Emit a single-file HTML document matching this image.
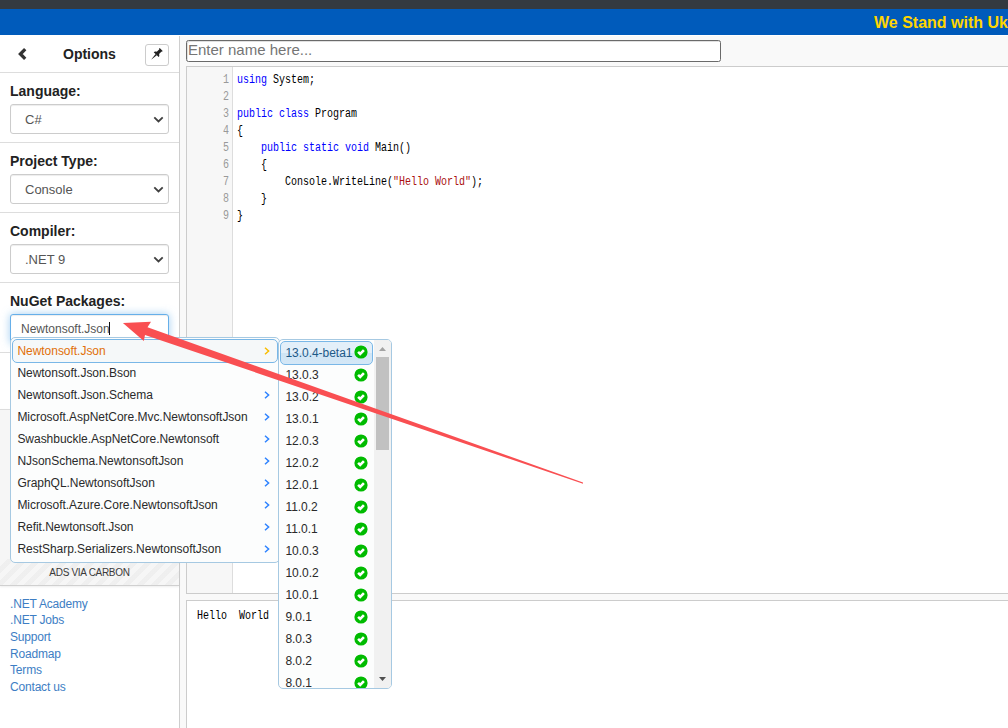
<!DOCTYPE html>
<html lang="en">
<head>
<meta charset="utf-8">
<title>C# Online Compiler | .NET Fiddle</title>
<style>
*{box-sizing:border-box;margin:0;padding:0}
html,body{width:1008px;height:728px;overflow:hidden}
body{position:relative;background:#fff;font-family:"Liberation Sans",Arial,sans-serif;font-size:14px;color:#222}
.abs{position:absolute}
#topdark{left:0;top:0;width:1008px;height:9px;background:#343a40}
#topblue{left:0;top:9px;width:1008px;height:26px;background:#005bbb;overflow:hidden}
#topblue span{position:absolute;left:874px;top:4px;font-weight:bold;font-size:16px;line-height:20px;color:#ffd500;white-space:nowrap}
#mainbg{left:180px;top:36px;width:828px;height:692px;background:#f9f9f9}
/* sidebar */
#sidebar{left:0;top:35px;width:180px;height:693px;background:linear-gradient(#fff,#fff) 0 0/180px 1px no-repeat,linear-gradient(#cecece,#cecece) 179px 0/1px 100% no-repeat,#fff}
.hdr{left:0;top:0;width:179px;height:38px;border-bottom:1px solid #ddd}
.hdr .title{position:absolute;left:63px;top:10px;font-weight:bold;font-size:14px;line-height:18px;color:#222}
.pin{left:145px;top:9px;width:24px;height:22px;border:1px solid #ccc;border-radius:3px;background:#fff}
.sec{left:0;width:179px;height:70px;border-bottom:1px solid #ddd}
.sec label{position:absolute;left:10px;top:9px;font-weight:bold;font-size:14px;line-height:18px;color:#222;white-space:nowrap}
.sel{position:absolute;left:10px;top:31px;width:159px;height:30px;border:1px solid #ccc;border-radius:3px;background:#fff;box-shadow:inset 0 1px 1px rgba(0,0,0,.075);font-size:13px;line-height:28px;color:#555;padding:1px 0 0 14px;white-space:nowrap}
.sel svg{position:absolute;right:3.7px;top:10.5px}
.sel.focus{border-color:#66afe9;box-shadow:inset 0 1px 1px rgba(0,0,0,.075),0 0 8px rgba(102,175,233,.6);font-size:12px;padding:0 0 0 10px}
.caret{display:inline-block;width:1px;height:13px;background:#111;vertical-align:-2px;margin-left:-1px}
#ads{left:0;top:374px;width:179px;height:177px;background:#f6f6f6;border-top:1px solid #ddd;border-bottom:1px solid #d0d0d0;box-shadow:0 1px 2px rgba(0,0,0,.07)}
#ads .via{position:absolute;left:0;bottom:0;width:179px;height:26px;background:repeating-linear-gradient(-45deg,transparent,transparent 5px,rgba(0,0,0,.028) 5px,rgba(0,0,0,.028) 10px);text-align:center;font-size:10px;line-height:27px;letter-spacing:-.3px;color:#3a3a3a;text-transform:uppercase}
#links{left:10px;top:561px;width:160px;height:100px;font-size:12px;line-height:17px;letter-spacing:-.18px}
#links a{position:absolute;left:0;display:block;color:#3d7ec4;text-decoration:none;white-space:nowrap}
/* main */
#name{left:186px;top:40px;width:535px;height:22px;border:1px solid #6a6a6a;border-radius:2.5px;background:#fff;font-size:15px;line-height:17px;color:#757575;padding:0 0 0 1px;box-shadow:inset 1px 1px 0 rgba(0,0,0,.12)}
#editor{left:186px;top:66px;width:830px;height:528px;border:1px solid #ccc;background:#fff}
#gutter{left:0;top:0;width:46px;height:526px;background:#f7f7f7;border-right:1px solid #ddd}
.code{font-family:"Liberation Mono","DejaVu Sans Mono",monospace;font-size:12px;line-height:17px;white-space:pre;color:#000;transform:scaleX(.8333);transform-origin:0 0}
#lnums{left:0;top:5px;width:42px;text-align:right;color:#999;transform-origin:100% 0}
#codetext{left:50px;top:5px}
.k{color:#00f}.s{color:#a11}
#output{left:186px;top:600px;width:830px;height:140px;border:1px solid #ccc;background:#fff}
#output pre{position:absolute;left:10px;top:7px}
/* menus */
.menu{border:1px solid #a6c9e2;border-radius:5px;background:#fcfdfd;padding:2px;font-size:12px;line-height:18px;color:#2a2a2a;letter-spacing:-.03px}
.menu .it{position:relative;height:22px;padding:2px 4.4px;white-space:nowrap}
.menu .it.act{margin:-1px;height:24px;padding:2px 4.4px;border:1px solid #79b7e7;border-radius:5px;background:#f5f8f9;color:#e17009}
.menu .it.hov{margin:-1px;height:24px;border:1px solid #79b7e7;border-radius:5px;background:linear-gradient(#e3eff9 0,#e3eff9 50%,#d0e5f5 50%,#d4e7f6 100%);color:#1d5987}
.menu .it.act,.menu .it.hov{padding:2px 4.4px}
.chev{position:absolute;right:7px;top:7px}
.act .chev,.hov .chev{right:7px;top:7px}
#menu1{left:10px;top:337px;width:270px;height:226px}
#menu2{left:278px;top:339px;width:114px;height:350px;overflow:hidden}
#menu2 .ok{position:absolute;left:73px;top:3.7px}
#menu2 .hov .ok{left:73px;top:3.4px}
#sb{right:0;top:0;width:17px;height:348px;background:#f1f1f1}
#sb .thumb{position:absolute;left:2px;top:17px;width:13px;height:93px;background:#c1c1c1}
</style>
</head>
<body>
<div id="topdark" class="abs"></div>
<div id="topblue" class="abs"><span>We Stand with Ukraine</span></div>
<div id="mainbg" class="abs"></div>

<div id="sidebar" class="abs">
  <div class="hdr abs">
    <svg class="abs" style="left:17px;top:12px" width="11" height="14" viewBox="0 0 11 14"><path d="M8.2 2.2 L3.4 7 L8.2 11.8" fill="none" stroke="#333" stroke-width="3.3" stroke-linejoin="miter"/></svg>
    <span class="title">Options</span>
    <div class="pin abs">
      <svg class="abs" style="left:0;top:0;overflow:visible" width="22" height="20" viewBox="0 0 22 20"><g transform="translate(15.7 4.1) rotate(45)" fill="#222"><path d="M-2.1 0.7H2.1V1.7H1.6V5.4C2.8 5.9 3.5 6.7 3.5 7.8H-3.5C-3.5 6.7 -2.8 5.9 -1.6 5.4V1.7H-2.1Z"/><path d="M-0.85 7.8H0.85L0 15Z"/></g></svg>
    </div>
  </div>
  <div class="sec abs" style="top:38px"><label>Language:</label><div class="sel">C#<svg width="11" height="8" viewBox="0 0 11 8"><path d="M1.3 1.3 L5.5 5.5 L9.7 1.3" fill="none" stroke="#404040" stroke-width="1.8"/></svg></div></div>
  <div class="sec abs" style="top:108px"><label>Project Type:</label><div class="sel">Console<svg width="11" height="8" viewBox="0 0 11 8"><path d="M1.3 1.3 L5.5 5.5 L9.7 1.3" fill="none" stroke="#404040" stroke-width="1.8"/></svg></div></div>
  <div class="sec abs" style="top:178px"><label>Compiler:</label><div class="sel">.NET 9<svg width="11" height="8" viewBox="0 0 11 8"><path d="M1.3 1.3 L5.5 5.5 L9.7 1.3" fill="none" stroke="#404040" stroke-width="1.8"/></svg></div></div>
  <div class="sec abs" style="top:248px"><label>NuGet Packages:</label><div class="sel focus">Newtonsoft.Json<span class="caret"></span></div></div>
  <div id="ads" class="abs"><div class="via">ads via Carbon</div></div>
  <div id="links" class="abs">
    <a style="top:0">.NET Academy</a><a style="top:16px">.NET Jobs</a><a style="top:33px">Support</a><a style="top:50px">Roadmap</a><a style="top:66px">Terms</a><a style="top:83px">Contact us</a>
  </div>
</div>

<div id="name" class="abs">Enter name here...</div>

<div id="editor" class="abs">
  <div id="gutter" class="abs"></div>
  <pre id="lnums" class="abs code">1
2
3
4
5
6
7
8
9</pre>
  <pre id="codetext" class="abs code"><span class="k">using</span> System;

<span class="k">public</span> <span class="k">class</span> Program
{
    <span class="k">public</span> <span class="k">static</span> <span class="k">void</span> Main()
    {
        Console.WriteLine(<span class="s">"Hello World"</span>);
    }
}</pre>
</div>

<div id="output" class="abs"><pre class="code">Hello  World</pre></div>

<div id="menu1" class="abs menu">
  <div class="it act">Newtonsoft.Json<svg class="chev" width="6" height="8" viewBox="0 0 6 8"><path d="M1 0.8 L4.6 4 L1 7.2" fill="none" stroke="#f9bd01" stroke-width="1.5"/></svg></div>
  <div class="it">Newtonsoft.Json.Bson</div>
  <div class="it">Newtonsoft.Json.Schema<svg class="chev" width="6" height="8" viewBox="0 0 6 8"><path d="M1 0.8 L4.6 4 L1 7.2" fill="none" stroke="#2e83ff" stroke-width="1.5"/></svg></div>
  <div class="it">Microsoft.AspNetCore.Mvc.NewtonsoftJson<svg class="chev" width="6" height="8" viewBox="0 0 6 8"><path d="M1 0.8 L4.6 4 L1 7.2" fill="none" stroke="#2e83ff" stroke-width="1.5"/></svg></div>
  <div class="it">Swashbuckle.AspNetCore.Newtonsoft<svg class="chev" width="6" height="8" viewBox="0 0 6 8"><path d="M1 0.8 L4.6 4 L1 7.2" fill="none" stroke="#2e83ff" stroke-width="1.5"/></svg></div>
  <div class="it">NJsonSchema.NewtonsoftJson<svg class="chev" width="6" height="8" viewBox="0 0 6 8"><path d="M1 0.8 L4.6 4 L1 7.2" fill="none" stroke="#2e83ff" stroke-width="1.5"/></svg></div>
  <div class="it">GraphQL.NewtonsoftJson<svg class="chev" width="6" height="8" viewBox="0 0 6 8"><path d="M1 0.8 L4.6 4 L1 7.2" fill="none" stroke="#2e83ff" stroke-width="1.5"/></svg></div>
  <div class="it">Microsoft.Azure.Core.NewtonsoftJson<svg class="chev" width="6" height="8" viewBox="0 0 6 8"><path d="M1 0.8 L4.6 4 L1 7.2" fill="none" stroke="#2e83ff" stroke-width="1.5"/></svg></div>
  <div class="it">Refit.Newtonsoft.Json<svg class="chev" width="6" height="8" viewBox="0 0 6 8"><path d="M1 0.8 L4.6 4 L1 7.2" fill="none" stroke="#2e83ff" stroke-width="1.5"/></svg></div>
  <div class="it">RestSharp.Serializers.NewtonsoftJson<svg class="chev" width="6" height="8" viewBox="0 0 6 8"><path d="M1 0.8 L4.6 4 L1 7.2" fill="none" stroke="#2e83ff" stroke-width="1.5"/></svg></div>
</div>

<div id="menu2" class="abs menu">
  <div style="width:91px">
  <div class="it hov">13.0.4-beta1<svg class="ok" width="14" height="14" viewBox="0 0 14 14"><circle cx="7" cy="7" r="6.6" fill="#0b0"/><path d="M4.1 6.9 L6.2 9 L9.9 5.1" fill="none" stroke="#fff" stroke-width="2.6"/></svg></div>
  <div class="it">13.0.3<svg class="ok" width="14" height="14" viewBox="0 0 14 14"><circle cx="7" cy="7" r="6.6" fill="#0b0"/><path d="M4.1 6.9 L6.2 9 L9.9 5.1" fill="none" stroke="#fff" stroke-width="2.6"/></svg></div>
  <div class="it">13.0.2<svg class="ok" width="14" height="14" viewBox="0 0 14 14"><circle cx="7" cy="7" r="6.6" fill="#0b0"/><path d="M4.1 6.9 L6.2 9 L9.9 5.1" fill="none" stroke="#fff" stroke-width="2.6"/></svg></div>
  <div class="it">13.0.1<svg class="ok" width="14" height="14" viewBox="0 0 14 14"><circle cx="7" cy="7" r="6.6" fill="#0b0"/><path d="M4.1 6.9 L6.2 9 L9.9 5.1" fill="none" stroke="#fff" stroke-width="2.6"/></svg></div>
  <div class="it">12.0.3<svg class="ok" width="14" height="14" viewBox="0 0 14 14"><circle cx="7" cy="7" r="6.6" fill="#0b0"/><path d="M4.1 6.9 L6.2 9 L9.9 5.1" fill="none" stroke="#fff" stroke-width="2.6"/></svg></div>
  <div class="it">12.0.2<svg class="ok" width="14" height="14" viewBox="0 0 14 14"><circle cx="7" cy="7" r="6.6" fill="#0b0"/><path d="M4.1 6.9 L6.2 9 L9.9 5.1" fill="none" stroke="#fff" stroke-width="2.6"/></svg></div>
  <div class="it">12.0.1<svg class="ok" width="14" height="14" viewBox="0 0 14 14"><circle cx="7" cy="7" r="6.6" fill="#0b0"/><path d="M4.1 6.9 L6.2 9 L9.9 5.1" fill="none" stroke="#fff" stroke-width="2.6"/></svg></div>
  <div class="it">11.0.2<svg class="ok" width="14" height="14" viewBox="0 0 14 14"><circle cx="7" cy="7" r="6.6" fill="#0b0"/><path d="M4.1 6.9 L6.2 9 L9.9 5.1" fill="none" stroke="#fff" stroke-width="2.6"/></svg></div>
  <div class="it">11.0.1<svg class="ok" width="14" height="14" viewBox="0 0 14 14"><circle cx="7" cy="7" r="6.6" fill="#0b0"/><path d="M4.1 6.9 L6.2 9 L9.9 5.1" fill="none" stroke="#fff" stroke-width="2.6"/></svg></div>
  <div class="it">10.0.3<svg class="ok" width="14" height="14" viewBox="0 0 14 14"><circle cx="7" cy="7" r="6.6" fill="#0b0"/><path d="M4.1 6.9 L6.2 9 L9.9 5.1" fill="none" stroke="#fff" stroke-width="2.6"/></svg></div>
  <div class="it">10.0.2<svg class="ok" width="14" height="14" viewBox="0 0 14 14"><circle cx="7" cy="7" r="6.6" fill="#0b0"/><path d="M4.1 6.9 L6.2 9 L9.9 5.1" fill="none" stroke="#fff" stroke-width="2.6"/></svg></div>
  <div class="it">10.0.1<svg class="ok" width="14" height="14" viewBox="0 0 14 14"><circle cx="7" cy="7" r="6.6" fill="#0b0"/><path d="M4.1 6.9 L6.2 9 L9.9 5.1" fill="none" stroke="#fff" stroke-width="2.6"/></svg></div>
  <div class="it">9.0.1<svg class="ok" width="14" height="14" viewBox="0 0 14 14"><circle cx="7" cy="7" r="6.6" fill="#0b0"/><path d="M4.1 6.9 L6.2 9 L9.9 5.1" fill="none" stroke="#fff" stroke-width="2.6"/></svg></div>
  <div class="it">8.0.3<svg class="ok" width="14" height="14" viewBox="0 0 14 14"><circle cx="7" cy="7" r="6.6" fill="#0b0"/><path d="M4.1 6.9 L6.2 9 L9.9 5.1" fill="none" stroke="#fff" stroke-width="2.6"/></svg></div>
  <div class="it">8.0.2<svg class="ok" width="14" height="14" viewBox="0 0 14 14"><circle cx="7" cy="7" r="6.6" fill="#0b0"/><path d="M4.1 6.9 L6.2 9 L9.9 5.1" fill="none" stroke="#fff" stroke-width="2.6"/></svg></div>
  <div class="it">8.0.1<svg class="ok" width="14" height="14" viewBox="0 0 14 14"><circle cx="7" cy="7" r="6.6" fill="#0b0"/><path d="M4.1 6.9 L6.2 9 L9.9 5.1" fill="none" stroke="#fff" stroke-width="2.6"/></svg></div>
  </div>
  <div id="sb" class="abs">
    <div class="thumb"></div>
    <svg class="abs" style="left:5px;top:7px" width="7" height="4" viewBox="0 0 7 4"><path d="M0 4 L3.5 0 L7 4z" fill="#a3a3a3"/></svg>
    <svg class="abs" style="left:5px;bottom:7px" width="7" height="4" viewBox="0 0 7 4"><path d="M0 0 L3.5 4 L7 0z" fill="#505050"/></svg>
  </div>
</div>

<svg class="abs" style="left:0;top:0;pointer-events:none" width="1008" height="728" viewBox="0 0 1008 728">
  <path d="M122.9 322.9 L151 321.7 L147.5 327.3 L583 482.5 L583 483.7 L145 334.9 L143.8 341 Z" fill="#f94f52"/>
</svg>
</body>
</html>
